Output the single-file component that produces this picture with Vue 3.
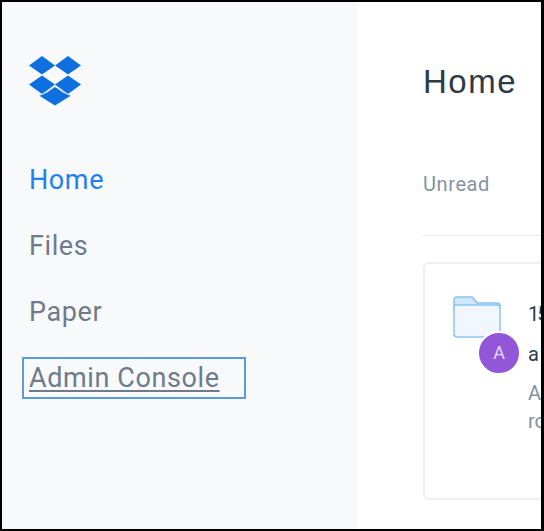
<template>
  <div class="frame">
    <aside class="sidebar">
      <svg class="logo" viewBox="0 0 52 50" width="52" height="50">
        <path fill="#0d6fe0" d="M13 0 26 9.500 13 18.500 0 9.500ZM39 0 52 9.500 39 18.500 26 9.500ZM13 19.500 26 28.500 13 38 0 28.500ZM39 19.500 52 28.500 39 38 26 28.500Z" />
        <path fill="#0d6fe0" d="M26 31 42 39.500 26 49.500 10 39.500Z" />
        <path fill="none" stroke="#dfeafa" stroke-width="1.200" d="M10 39.500 18 36 26 30 34 36 42 39.500" />
      </svg>
      <nav class="nav">
        <a
          v-for="item in items"
          :key="item.label"
          class="nav-item"
          :class="{ active: item.active, focused: item.focused }"
        >{{ item.label }}</a>
      </nav>
    </aside>

    <main class="content">
      <h1 class="title">Home</h1>
      <div class="tabs">
        <span class="tab">Unread</span>
      </div>
      <section class="card">
        <div class="thumb">
          <svg class="folder" viewBox="0 0 48 42" width="48" height="42">
            <path fill="#cfe6fb" stroke="#8cc3f5" stroke-width="1.500" d="M1 9V4Q1 1 4 1H18Q20 1 21 3L24 7H44Q47 7 47 10V12H1Z" />
            <path fill="#f0f7fe" stroke="#8cc3f5" stroke-width="1.500" d="M1 9H44Q47 9 47 12V38Q47 41 44 41H4Q1 41 1 38Z" />
          </svg>
          <span class="avatar">A</span>
        </div>
        <div class="lines">
          <div class="name">15 new files</div>
          <div class="who">admin</div>
          <div class="desc">Added to your<br />room folder</div>
        </div>
      </section>
    </main>
  </div>
</template>

<script setup>
const items = [
  { label: "Home", active: true },
  { label: "Files" },
  { label: "Paper" },
  { label: "Admin Console", focused: true },
];
</script>

<style>
html,
body {
  margin: 0;
  background: #000;
}
</style>

<style scoped>
.frame {
  box-sizing: border-box;
  width: 544px;
  height: 531px;
  border: solid #000;
  border-width: 2px 3px 2px 2px;
  display: flex;
  background: #fff;
  overflow: hidden;
  font-family: Roboto, "Liberation Sans", sans-serif;
}

.sidebar {
  flex: 0 0 355px;
  background: #f7f9fb;
  padding: 54px 0 0 21px;
  box-sizing: border-box;
}

.logo {
  display: block;
  margin-left: 6px;
}

.nav {
  margin-top: 54px;
  display: flex;
  flex-direction: column;
  gap: 26px;
}

.nav-item {
  box-sizing: border-box;
  width: 222px;
  height: 40px;
  padding: 0 6px;
  line-height: 40px;
  font-size: 27px;
  letter-spacing: 0.6px;
  color: #6f7b8a;
}

.active {
  color: #1f80f0;
}

.focused {
  outline: 2px solid #5b9bd8;
  outline-offset: -1px;
  text-decoration: underline;
  text-decoration-thickness: 2px;
  text-underline-offset: 3px;
}

.content {
  flex: 1;
  min-width: 0;
  padding: 58px 0 0 66px;
  overflow: hidden;
}

.title {
  margin: 0;
  font-size: 33px;
  line-height: 44px;
  font-weight: 400;
  letter-spacing: 1.5px;
  color: #2e3a47;
  font-family: "Liberation Sans", sans-serif;
}

.tabs {
  margin-top: 66px;
  height: 66px;
  border-bottom: 1px solid #e4e7eb;
  box-sizing: border-box;
}

.tab {
  font-size: 20px;
  line-height: 28px;
  letter-spacing: 0.6px;
  color: #8592a3;
}

.card {
  margin-top: 26px;
  width: 300px;
  height: 238px;
  box-sizing: border-box;
  border: 2px solid #eef0f3;
  border-radius: 6px;
  padding: 32px 0 0 28px;
  display: flex;
  gap: 27px;
}

.thumb {
  position: relative;
  flex: 0 0 48px;
  height: 42px;
}

.folder {
  display: block;
}

.avatar {
  position: absolute;
  left: 24px;
  top: 35px;
  width: 40px;
  height: 40px;
  border-radius: 50%;
  background: #9256d9;
  border: 2px solid #fff;
  color: #e6d8f7;
  font-size: 18px;
  line-height: 40px;
  text-align: center;
}

.lines {
  margin-top: 4px;
  white-space: nowrap;
  font-size: 20px;
  line-height: 28px;
  color: #2e3a47;
}

.name {
  letter-spacing: -2px;
}

.who {
  margin-top: 12px;
  letter-spacing: 2px;
}

.desc {
  margin-top: 11px;
  color: #8592a3;
}
</style>
